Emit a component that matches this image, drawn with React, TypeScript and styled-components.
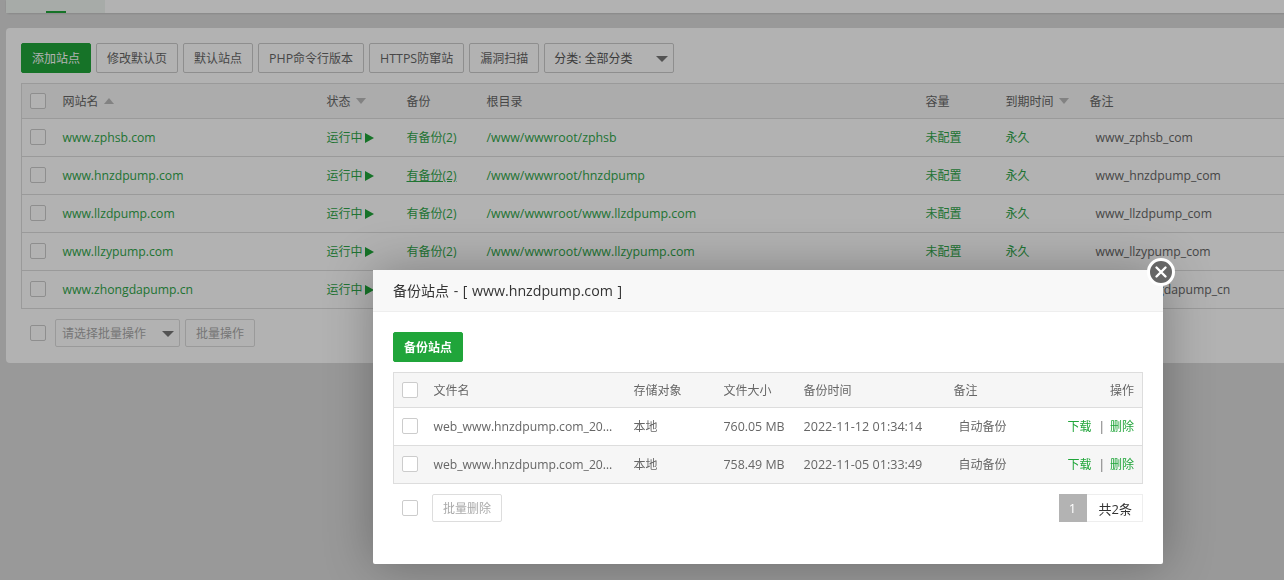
import React from "react";
import styled, { createGlobalStyle } from "styled-components";

const FONT = `"Open Sans", "Noto Sans CJK SC", sans-serif`;

const GlobalStyle = createGlobalStyle`
  html, body {
    margin: 0;
    padding: 0;
    width: 1284px;
    height: 580px;
    overflow: hidden;
    background: #dcdcdc;
    font-family: ${FONT};
    font-size: 12px;
    color: #666;
  }
  * { box-sizing: border-box; }
`;

const Page = styled.div`
  width: 1284px;
  height: 580px;
  padding-left: 6px;
  overflow: hidden;
`;

const TopBar = styled.div`
  height: 13px;
  background: #fff;
  border-radius: 0 0 4px 4px;
  box-shadow: 0 1px 2px rgba(0, 0, 0, 0.12);
  width: 1300px;
`;

const TabHead = styled.div`
  width: 99px;
  height: 13px;
  padding-left: 40px;
  background: #f0f5f1;
  display: flex;
  align-items: flex-end;
`;

const TabMark = styled.span`
  width: 20px;
  height: 2px;
  background: #20a53a;
`;

const Panel = styled.section`
  margin-top: 15px;
  width: 1340px;
  height: 335px;
  padding: 15px;
  background: #fff;
  border-radius: 4px;
`;

const Toolbar = styled.div`
  display: flex;
  gap: 5px;
  height: 30px;
  margin-bottom: 10px;
`;

const Button = styled.button<{ $primary?: boolean; $muted?: boolean; $h?: number }>`
  height: ${(p) => p.$h ?? 30}px;
  padding: 0 10px;
  border: 1px solid ${(p) => (p.$primary ? "#20a53a" : p.$muted ? "#ddd" : "#ccc")};
  border-radius: 2px;
  background: ${(p) => (p.$primary ? "#20a53a" : "#fff")};
  color: ${(p) => (p.$primary ? "#fff" : p.$muted ? "#aaa" : "#666")};
  font: 12px ${FONT};
  white-space: nowrap;
`;

const Latin = styled.span<{ $size?: number }>`
  font-size: ${(p) => p.$size ?? 12.4}px;
`;

const SelectBox = styled.div<{ $w: number; $h: number; $muted?: boolean }>`
  width: ${(p) => p.$w}px;
  height: ${(p) => p.$h}px;
  padding: 0 9px 0 ${(p) => (p.$muted ? 6 : 9)}px;
  display: flex;
  align-items: center;
  justify-content: space-between;
  border: 1px solid ${(p) => (p.$muted ? "#ddd" : "#ccc")};
  border-radius: 2px;
  background: #fff;
  color: ${(p) => (p.$muted ? "#aaa" : "#555")};
  &::after {
    content: "";
    margin-top: 1px;
    margin-right: -4px;
    border-style: solid;
    border-width: 6px 6px 0;
    border-color: #777 transparent transparent;
  }
`;

const Table = styled.table<{ $w: number }>`
  width: ${(p) => p.$w}px;
  table-layout: fixed;
  border-collapse: collapse;
  border: 1px solid #ddd;
  font-size: 12px;
`;

const HeadCell = styled.th<{ $right?: boolean }>`
  height: 35px;
  padding: 0 ${(p) => (p.$right ? 8 : 10)}px 0 10px;
  background: #f6f6f6;
  border-bottom: 1px solid #ddd;
  color: #666;
  font-weight: 400;
  text-align: ${(p) => (p.$right ? "right" : "left")};
  white-space: nowrap;
`;

const Row = styled.tr<{ $shaded?: boolean }>`
  background: ${(p) => (p.$shaded ? "#f6f6f6" : "transparent")};
`;

const Cell = styled.td<{
  $green?: boolean;
  $inset?: number;
  $right?: boolean;
  $flush?: boolean;
  $size?: number;
}>`
  height: 38px;
  padding: 0 ${(p) => (p.$flush ? 0 : p.$right ? 8 : 10)}px 1px ${(p) => p.$inset ?? 10}px;
  border-bottom: 1px solid #ddd;
  color: ${(p) => (p.$green ? "#2fa64a" : "#666")};
  font-size: ${(p) => p.$size ?? 12}px;
  text-align: ${(p) => (p.$right ? "right" : "left")};
  white-space: nowrap;
  overflow: hidden;
  text-overflow: ellipsis;
`;

const Check = styled.span`
  display: block;
  width: 16px;
  height: 16px;
  background: #fff;
  border: 1px solid #ccc;
  border-radius: 2px;
`;

const CheckCell = styled(Cell)`
  padding: 0 0 1px 8px;
`;

const CheckHead = styled(HeadCell)`
  padding: 0 0 0 8px;
`;

const SortArrow = styled.span<{ $up?: boolean }>`
  display: inline-block;
  margin-left: 5px;
  vertical-align: 2px;
  border-style: solid;
  border-width: ${(p) => (p.$up ? "0 5px 6px" : "6px 5px 0")};
  border-color: ${(p) =>
    p.$up ? "transparent transparent #bbb" : "#bbb transparent transparent"};
`;

const Play = styled.span`
  display: inline-block;
  margin-left: 2px;
  vertical-align: -1px;
  border-style: solid;
  border-width: 5px 0 5px 9px;
  border-color: transparent transparent transparent #20a53a;
`;

const Hovered = styled.span`
  text-decoration: underline;
`;

const BatchBar = styled.div`
  display: flex;
  align-items: center;
  gap: 5px;
  margin: 10px 0 0 9px;
`;

const BatchCheck = styled(Check)`
  margin-right: 4px;
`;

const Overlay = styled.div`
  position: fixed;
  inset: 0;
  background: rgba(0, 0, 0, 0.3);
`;

const Modal = styled.div`
  position: absolute;
  left: 373px;
  top: 270px;
  width: 790px;
  height: 294px;
  background: #fff;
  border-radius: 2px;
  box-shadow: 1px 1px 50px rgba(0, 0, 0, 0.3);
`;

const ModalTitle = styled.div`
  height: 42px;
  padding: 0 20px 1px;
  display: flex;
  align-items: center;
  background: #f8f8f8;
  border-bottom: 1px solid #eee;
  font-size: 14px;
  word-spacing: 1px;
  white-space: pre;
  color: #333;
`;

const CloseButton = styled.button`
  position: absolute;
  top: -12px;
  right: -12px;
  width: 28px;
  height: 28px;
  padding: 0;
  display: flex;
  align-items: center;
  justify-content: center;
  border: 3px solid #fff;
  border-radius: 50%;
  background: #666;
`;

const ModalBody = styled.div`
  padding: 20px;
`;

const ModalAction = styled(Button)`
  display: block;
  margin-bottom: 10px;
  font-weight: 700;
  color: #fff;
`;

const ModalFoot = styled.div`
  display: flex;
  align-items: center;
  justify-content: space-between;
  margin-top: 10px;
  padding-left: 9px;
`;

const FootLeft = styled.div`
  display: flex;
  align-items: center;
  gap: 14px;
`;

const Pager = styled.div`
  display: flex;
  height: 28px;
  border: 1px solid #eee;
  border-left: 0;
  color: #333;
  font-size: 13px;
`;

const PageCurrent = styled.span`
  width: 28px;
  margin-top: -1px;
  margin-bottom: -1px;
  display: flex;
  align-items: center;
  justify-content: center;
  background: #b3b3b3;
  color: #fff;
`;

const PageTotal = styled.span`
  padding: 0 10px 0 12px;
  display: flex;
  align-items: center;
`;

const Link = styled.span`
  color: #20a53a;
`;

const Sep = styled.span`
  margin: 0 5px 0 7px;
  color: #666;
`;

const sites = [
  { name: "www.zphsb.com", path: "/www/wwwroot/zphsb", note: "www_zphsb_com" },
  { name: "www.hnzdpump.com", path: "/www/wwwroot/hnzdpump", note: "www_hnzdpump_com", hover: true },
  { name: "www.llzdpump.com", path: "/www/wwwroot/www.llzdpump.com", note: "www_llzdpump_com" },
  { name: "www.llzypump.com", path: "/www/wwwroot/www.llzypump.com", note: "www_llzypump_com" },
  { name: "www.zhongdapump.cn", path: "/www/wwwroot/www.zhongdapump.cn", note: "www_zhongdapump_cn" },
];

const backups = [
  { file: "web_www.hnzdpump.com_20221112_013414.tar.gz", size: "760.05 MB", time: "2022-11-12 01:34:14" },
  { file: "web_www.hnzdpump.com_20221105_013349.tar.gz", size: "758.49 MB", time: "2022-11-05 01:33:49", shaded: true },
];

const App = () => {
  return (
    <>
      <GlobalStyle />
      <Page>
        <TopBar>
          <TabHead>
            <TabMark />
          </TabHead>
        </TopBar>
        <Panel>
          <Toolbar>
            <Button $primary>添加站点</Button>
            <Button>修改默认页</Button>
            <Button>默认站点</Button>
            <Button><Latin>PHP</Latin>命令行版本</Button>
            <Button><Latin>HTTPS</Latin>防窜站</Button>
            <Button>漏洞扫描</Button>
            <SelectBox $w={130} $h={30}>分类: 全部分类</SelectBox>
          </Toolbar>
          <Table $w={1300}>
            <colgroup>
              <col width={31} />
              <col width={264} />
              <col width={80} />
              <col width={80} />
              <col width={439} />
              <col width={80} />
              <col width={84} />
              <col width={242} />
            </colgroup>
            <thead>
              <tr>
                <CheckHead><Check /></CheckHead>
                <HeadCell>网站名<SortArrow $up /></HeadCell>
                <HeadCell>状态<SortArrow /></HeadCell>
                <HeadCell>备份</HeadCell>
                <HeadCell>根目录</HeadCell>
                <HeadCell>容量</HeadCell>
                <HeadCell>到期时间<SortArrow /></HeadCell>
                <HeadCell>备注</HeadCell>
              </tr>
            </thead>
            <tbody>
              {sites.map((site) => (
                <Row key={site.name}>
                  <CheckCell><Check /></CheckCell>
                  <Cell $green $size={12.2}>{site.name}</Cell>
                  <Cell $green>运行中<Play /></Cell>
                  <Cell $green>
                    {site.hover ? <Hovered>有备份(2)</Hovered> : "有备份(2)"}
                  </Cell>
                  <Cell $green $size={12.4}>{site.path}</Cell>
                  <Cell $green>未配置</Cell>
                  <Cell $green>永久</Cell>
                  <Cell $inset={16} $size={12.2}>{site.note}</Cell>
                </Row>
              ))}
            </tbody>
          </Table>
          <BatchBar>
            <BatchCheck />
            <SelectBox $w={125} $h={28} $muted>请选择批量操作</SelectBox>
            <Button $h={28} $muted>批量操作</Button>
          </BatchBar>
        </Panel>
      </Page>
      <Overlay />
      <Modal>
        <ModalTitle>备份站点 - [ <Latin $size={14.2}>www.hnzdpump.com</Latin> ]</ModalTitle>
        <CloseButton aria-label="关闭">
          <svg width="14" height="14" viewBox="0 0 14 14">
            <path d="M2.5 2.5 11.5 11.5M11.5 2.5 2.5 11.5" stroke="#fff" strokeWidth="2.4" strokeLinecap="round" />
          </svg>
        </CloseButton>
        <ModalBody>
          <ModalAction $primary>备份站点</ModalAction>
          <Table $w={749}>
            <colgroup>
              <col width={30} />
              <col width={200} />
              <col width={90} />
              <col width={80} />
              <col width={150} />
              <col width={110} />
              <col width={89} />
            </colgroup>
            <thead>
              <tr>
                <CheckHead><Check /></CheckHead>
                <HeadCell>文件名</HeadCell>
                <HeadCell>存储对象</HeadCell>
                <HeadCell>文件大小</HeadCell>
                <HeadCell>备份时间</HeadCell>
                <HeadCell>备注</HeadCell>
                <HeadCell $right>操作</HeadCell>
              </tr>
            </thead>
            <tbody>
              {backups.map((b) => (
                <Row key={b.time} $shaded={b.shaded}>
                  <CheckCell><Check /></CheckCell>
                  <Cell $size={12.2}>{b.file}</Cell>
                  <Cell>本地</Cell>
                  <Cell $size={12.4} $flush>{b.size}</Cell>
                  <Cell $size={12.6}>{b.time}</Cell>
                  <Cell $inset={15}>自动备份</Cell>
                  <Cell $right>
                    <Link>下载</Link>
                    <Sep>|</Sep>
                    <Link>删除</Link>
                  </Cell>
                </Row>
              ))}
            </tbody>
          </Table>
          <ModalFoot>
            <FootLeft>
              <Check />
              <Button $h={28} $muted>批量删除</Button>
            </FootLeft>
            <Pager>
              <PageCurrent>1</PageCurrent>
              <PageTotal>共2条</PageTotal>
            </Pager>
          </ModalFoot>
        </ModalBody>
      </Modal>
    </>
  );
};

export default App;
